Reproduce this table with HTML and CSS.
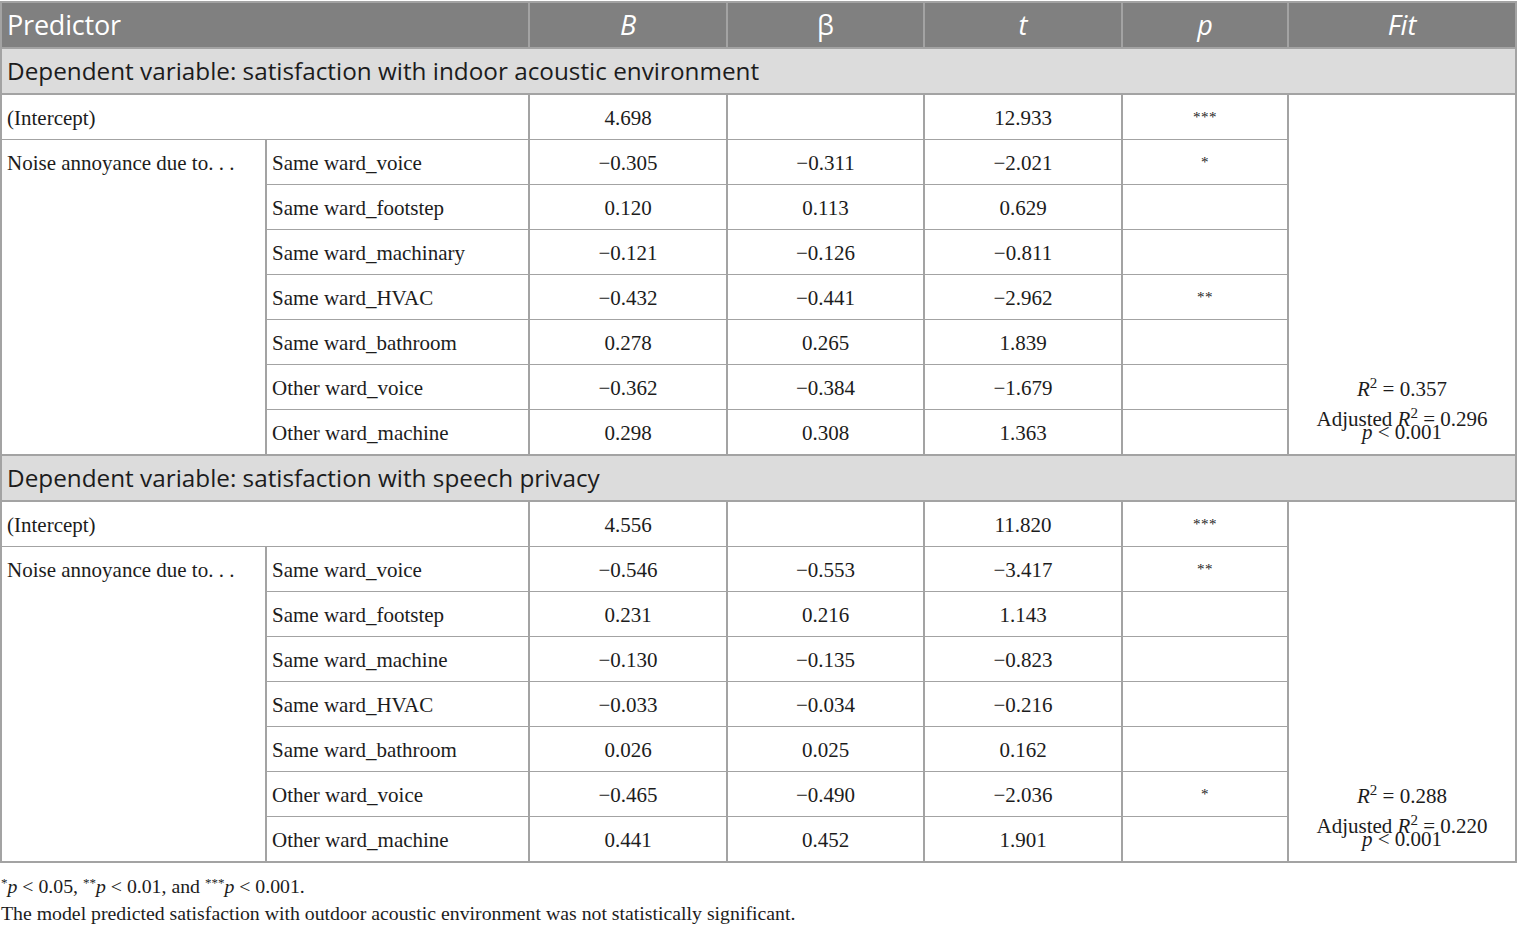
FILE: index.html
```html
<!DOCTYPE html>
<html>
<head>
<meta charset="utf-8">
<link rel="stylesheet" href="styles.css">
</head>
<body>
<table class="tbl">
  <colgroup>
    <col class="c1"><col class="c2"><col class="c3"><col class="c4"><col class="c5"><col class="c6"><col class="c7">
  </colgroup>
  <thead>
    <tr class="head">
      <th colspan="2" class="left">Predictor</th>
      <th><i>B</i></th>
      <th>β</th>
      <th><i>t</i></th>
      <th><i>p</i></th>
      <th><i>Fit</i></th>
    </tr>
  </thead>
  <tbody>
    <tr class="section"><td colspan="7">Dependent variable: satisfaction with indoor acoustic environment</td></tr>
    <tr class="first"><td colspan="2" class="left">(Intercept)</td><td>4.698</td><td></td><td>12.933</td><td class="sig"><span>***</span></td>
      <td rowspan="8" class="fit"><div class="fitbox"><div class="r2"><i>R</i><sup>2</sup> = 0.357</div><div class="adj">Adjusted <i>R</i><sup>2</sup> = 0.296</div><div class="pv"><i>p</i> &lt; 0.001</div></div></td></tr>
    <tr><td rowspan="7" class="left top">Noise annoyance due to. . .</td><td class="left">Same ward_voice</td><td>−0.305</td><td>−0.311</td><td>−2.021</td><td class="sig"><span>*</span></td></tr>
    <tr><td class="left">Same ward_footstep</td><td>0.120</td><td>0.113</td><td>0.629</td><td></td></tr>
    <tr><td class="left">Same ward_machinary</td><td>−0.121</td><td>−0.126</td><td>−0.811</td><td></td></tr>
    <tr><td class="left">Same ward_HVAC</td><td>−0.432</td><td>−0.441</td><td>−2.962</td><td class="sig"><span>**</span></td></tr>
    <tr><td class="left">Same ward_bathroom</td><td>0.278</td><td>0.265</td><td>1.839</td><td></td></tr>
    <tr><td class="left">Other ward_voice</td><td>−0.362</td><td>−0.384</td><td>−1.679</td><td></td></tr>
    <tr><td class="left">Other ward_machine</td><td>0.298</td><td>0.308</td><td>1.363</td><td></td></tr>
    <tr class="section"><td colspan="7">Dependent variable: satisfaction with speech privacy</td></tr>
    <tr class="first"><td colspan="2" class="left">(Intercept)</td><td>4.556</td><td></td><td>11.820</td><td class="sig"><span>***</span></td>
      <td rowspan="8" class="fit"><div class="fitbox"><div class="r2"><i>R</i><sup>2</sup> = 0.288</div><div class="adj">Adjusted <i>R</i><sup>2</sup> = 0.220</div><div class="pv"><i>p</i> &lt; 0.001</div></div></td></tr>
    <tr><td rowspan="7" class="left top">Noise annoyance due to. . .</td><td class="left">Same ward_voice</td><td>−0.546</td><td>−0.553</td><td>−3.417</td><td class="sig"><span>**</span></td></tr>
    <tr><td class="left">Same ward_footstep</td><td>0.231</td><td>0.216</td><td>1.143</td><td></td></tr>
    <tr><td class="left">Same ward_machine</td><td>−0.130</td><td>−0.135</td><td>−0.823</td><td></td></tr>
    <tr><td class="left">Same ward_HVAC</td><td>−0.033</td><td>−0.034</td><td>−0.216</td><td></td></tr>
    <tr><td class="left">Same ward_bathroom</td><td>0.026</td><td>0.025</td><td>0.162</td><td></td></tr>
    <tr><td class="left">Other ward_voice</td><td>−0.465</td><td>−0.490</td><td>−2.036</td><td class="sig"><span>*</span></td></tr>
    <tr><td class="left">Other ward_machine</td><td>0.441</td><td>0.452</td><td>1.901</td><td></td></tr>
  </tbody>
</table>
<div class="notes">
  <p><sup>*</sup><i>p</i> &lt; 0.05, <sup>**</sup><i>p</i> &lt; 0.01, and <sup>***</sup><i>p</i> &lt; 0.001.</p>
  <p>The model predicted satisfaction with outdoor acoustic environment was not statistically significant.</p>
</div>
</body>
</html>
```

FILE: styles.css
```css
html, body {
  margin: 0;
  padding: 0;
  background: #ffffff;
}
body {
  padding: 1px 0 0 0;
  font-family: "Liberation Serif", "Times New Roman", serif;
  color: #1c1c1c;
}
.tbl {
  border-collapse: collapse;
  table-layout: fixed;
  width: 1515px;
  border: 2px solid #a3a3a3;
  font-size: 21px;
}
.c1 { width: 265px; }
.c2 { width: 263px; }
.c3 { width: 198px; }
.c4 { width: 197px; }
.c5 { width: 198px; }
.c6 { width: 166px; }
.c7 { width: 228px; }
.tbl td, .tbl th {
  border-left: 2px solid #a3a3a3;
  border-right: 2px solid #a3a3a3;
  border-top: 1px solid #a3a3a3;
  border-bottom: 1px solid #a3a3a3;
  text-align: center;
  padding: 2px 4px 0 4px;
  height: 42px;
  vertical-align: middle;
  line-height: 24px;
}
.tbl td.left, .tbl th.left {
  text-align: left;
  padding-left: 5px;
}
.tbl td.top {
  vertical-align: top;
  padding-top: 11px;
}
.head th {
  background: #808080;
  color: #ffffff;
  font-family: "Open Sans", "Noto Sans", sans-serif;
  font-weight: normal;
  font-size: 27px;
  padding-top: 0;
  height: 44px;
  border-bottom: 2px solid #a3a3a3;
}
.head th.left {
  letter-spacing: -0.2px;
}
.section td {
  background: #dcdcdc;
  text-align: left;
  font-family: "Open Sans", "Noto Sans", sans-serif;
  font-size: 24.3px;
  color: #1c1c1c;
  padding-left: 5px;
  padding-top: 0;
  border-top: 2px solid #a3a3a3;
  border-bottom: 2px solid #a3a3a3;
  height: 44px;
}
.first td {
  border-top: 2px solid #a3a3a3;
}
.tbl td.sig {
  font-size: 15px;
  letter-spacing: 0.5px;
}
.sig span {
  position: relative;
  top: -1px;
}
.tbl td.fit {
  vertical-align: bottom;
  padding-bottom: 15px;
}
.fitbox {
  display: flex;
  flex-direction: column;
  align-items: center;
}
.fit sup {
  font-size: 15px;
  vertical-align: 8px;
}
.r2 {
  line-height: 24px;
  margin-bottom: 8px;
}
.adj {
  line-height: 20px;
}
.pv {
  line-height: 14px;
  margin-top: -4px;
}
sup {
  font-size: 13px;
  line-height: 0;
  vertical-align: 7px;
}
.notes {
  padding-top: 10px;
  font-size: 19.8px;
  color: #1c1c1c;
}
.notes p {
  margin: 0;
  line-height: 27px;
  padding-left: 1px;
}
.notes sup {
  font-size: 13px;
  vertical-align: 6px;
}
```
